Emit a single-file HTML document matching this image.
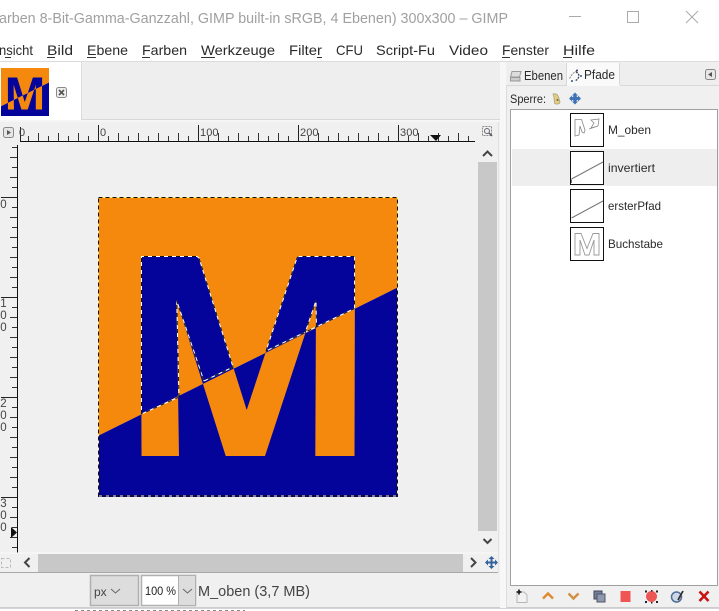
<!DOCTYPE html>
<html><head><meta charset="utf-8"><title>GIMP</title>
<style>
html,body{margin:0;padding:0;background:#fff;width:719px;height:611px;overflow:hidden}
svg{display:block}
text{font-family:"Liberation Sans",sans-serif}
</style></head>
<body>
<svg width="719" height="611" viewBox="0 0 719 611" xmlns="http://www.w3.org/2000/svg">
<defs>
<clipPath id="up"><polygon points="98,197 398,197 398,287.3 98,435.9"/></clipPath>
<clipPath id="dn"><polygon points="98,435.9 398,287.3 398,497 98,497"/></clipPath>
</defs>

<!-- title bar -->
<rect width="719" height="61" fill="#fff"/>
<text x="-1" y="23" font-size="14.5" fill="#a0a0a0" textLength="509" lengthAdjust="spacingAndGlyphs">arben 8-Bit-Gamma-Ganzzahl, GIMP built-in sRGB, 4 Ebenen) 300x300 – GIMP</text>
<line x1="569" x2="581" y1="16.5" y2="16.5" stroke="#aaa"/>
<rect x="627.5" y="11.5" width="11" height="11" fill="none" stroke="#aaa"/>
<path d="M686 11L698 23M698 11L686 23" stroke="#aaa" fill="none"/>

<!-- menu -->
<g font-size="14" fill="#2a2a2a">
<text x="-1" y="55" textLength="34" lengthAdjust="spacingAndGlyphs">nsicht</text>
<text x="47" y="55" textLength="26" lengthAdjust="spacingAndGlyphs">Bild</text>
<text x="87" y="55" textLength="41" lengthAdjust="spacingAndGlyphs">Ebene</text>
<text x="142" y="55" textLength="45" lengthAdjust="spacingAndGlyphs">Farben</text>
<text x="201" y="55" textLength="74" lengthAdjust="spacingAndGlyphs">Werkzeuge</text>
<text x="289" y="55" textLength="33" lengthAdjust="spacingAndGlyphs">Filter</text>
<text x="336" y="55" textLength="27" lengthAdjust="spacingAndGlyphs">CFU</text>
<text x="376" y="55" textLength="59" lengthAdjust="spacingAndGlyphs">Script-Fu</text>
<text x="449" y="55" textLength="39" lengthAdjust="spacingAndGlyphs">Video</text>
<text x="502" y="55" textLength="47" lengthAdjust="spacingAndGlyphs">Fenster</text>
<text x="563" y="55" textLength="32" lengthAdjust="spacingAndGlyphs">Hilfe</text>
</g>
<g stroke="#333" stroke-width="1">
<line x1="5" x2="11" y1="57.5" y2="57.5"/>
<line x1="47" x2="55" y1="57.5" y2="57.5"/>
<line x1="87" x2="96" y1="57.5" y2="57.5"/>
<line x1="142" x2="150" y1="57.5" y2="57.5"/>
<line x1="201" x2="215" y1="57.5" y2="57.5"/>
<line x1="317" x2="322" y1="57.5" y2="57.5"/>
<line x1="502" x2="510" y1="57.5" y2="57.5"/>
<line x1="563" x2="572" y1="57.5" y2="57.5"/>
</g>

<!-- main bg -->
<rect x="0" y="61" width="719" height="550" fill="#f0f0f0"/>
<line x1="0" x2="719" y1="61.5" y2="61.5" stroke="#dcdcdc"/>

<!-- tab bar -->
<rect x="81" y="62" width="419" height="58" fill="#eeeeee"/>
<rect x="0" y="62" width="81" height="58" fill="#fff"/>
<line x1="81.5" x2="81.5" y1="62" y2="120" stroke="#dcdcdc"/>
<line x1="81" x2="500" y1="119.5" y2="119.5" stroke="#d8d8d8"/>
<rect x="0" y="120" width="500" height="2" fill="#f6f6f6"/>

<!-- thumbnail -->
<g transform="translate(1,68) scale(.16) translate(-98,-197)">
<g clip-path="url(#up)">
<rect x="98" y="197" width="300" height="300" fill="#f5890d"/>
<polygon points="141,256 197,256 199,258 246.7,410 297,257 299,256 355,256 354.5,456 315.3,456 316,300.7 265,456 225.7,456 176.7,300.7 179,456 141.5,456" fill="#04049a"/>
</g>
<g clip-path="url(#dn)">
<rect x="98" y="197" width="300" height="300" fill="#04049a"/>
<polygon points="141,256 197,256 199,258 246.7,410 297,257 299,256 355,256 354.5,456 315.3,456 316,300.7 265,456 225.7,456 176.7,300.7 179,456 141.5,456" fill="#f5890d"/>
</g>
</g>
<rect x="56.5" y="87.5" width="10" height="10" rx="2" fill="#eee" stroke="#8a8a8a"/>
<path d="M59 90l5 5M64 90l-5 5" stroke="#555" stroke-width="1.6"/>

<!-- ruler corner button -->
<rect x="3.5" y="127.5" width="10" height="10" rx="2" fill="#e6e6e6" stroke="#8a8a8a"/>
<polygon points="7,130 7,135 11,132.5" fill="#555"/>

<!-- horizontal ruler -->
<line x1="20" x2="475" y1="141.5" y2="141.5" stroke="#111"/>
<line x1="20" x2="475" y1="138.5" y2="138.5" stroke="#333" stroke-width="5" stroke-dasharray="1 9" stroke-dashoffset="-8"/>
<line x1="20" x2="475" y1="137" y2="137" stroke="#333" stroke-width="8" stroke-dasharray="1 19" stroke-dashoffset="-18"/>
<g stroke="#222">
<line x1="98.5" x2="98.5" y1="125" y2="141"/>
<line x1="198.5" x2="198.5" y1="125" y2="141"/>
<line x1="298.5" x2="298.5" y1="125" y2="141"/>
<line x1="398.5" x2="398.5" y1="125" y2="141"/>
<line x1="20.5" x2="20.5" y1="127" y2="141"/>
</g>
<g font-size="11" fill="#444">
<text x="19" y="136">0</text>
<text x="100" y="136">0</text>
<text x="200" y="136" textLength="18.5">100</text>
<text x="300" y="136" textLength="18.5">200</text>
<text x="400" y="136" textLength="18.5">300</text>
</g>
<polygon points="430,135 441,135 436,141" fill="#111"/>

<!-- zoom-corner icon -->
<rect x="482.5" y="126.5" width="9" height="9" fill="none" stroke="#888" stroke-dasharray="2 1"/>
<circle cx="487" cy="131" r="2.5" fill="none" stroke="#667"/>
<line x1="489" y1="133" x2="492" y2="136" stroke="#555" stroke-width="1.5"/>

<!-- vertical ruler -->
<line x1="17.5" x2="17.5" y1="145" y2="553" stroke="#111"/>
<line x1="14.5" x2="14.5" y1="147" y2="553" stroke="#333" stroke-width="5" stroke-dasharray="1 9"/>
<line x1="13.5" x2="13.5" y1="157" y2="553" stroke="#333" stroke-width="7" stroke-dasharray="1 19"/>
<g stroke="#222">
<line x1="1" x2="17" y1="197.5" y2="197.5"/>
<line x1="1" x2="17" y1="297.5" y2="297.5"/>
<line x1="1" x2="17" y1="397.5" y2="397.5"/>
<line x1="1" x2="17" y1="497.5" y2="497.5"/>
</g>
<g font-size="11.5" fill="#444" text-anchor="middle">
<text x="3.5" y="208">0</text>
<text x="3.5" y="307">1</text><text x="3.5" y="319">0</text><text x="3.5" y="331">0</text>
<text x="3.5" y="407">2</text><text x="3.5" y="419">0</text><text x="3.5" y="431">0</text>
<text x="3.5" y="507">3</text><text x="3.5" y="519">0</text><text x="3.5" y="531">0</text>
</g>
<polygon points="11,527 11,538 17,532.5" fill="#111"/>

<!-- image: orange upper / blue lower with inverted M -->
<g clip-path="url(#up)">
<rect x="98" y="197" width="300" height="300" fill="#f5890d"/>
<polygon points="141,256 197,256 199,258 246.7,410 297,257 299,256 355,256 354.5,456 315.3,456 316,300.7 265,456 225.7,456 176.7,300.7 179,456 141.5,456" fill="#04049a"/>
</g>
<g clip-path="url(#dn)">
<rect x="98" y="197" width="300" height="300" fill="#04049a"/>
<polygon points="141,256 197,256 199,258 246.7,410 297,257 299,256 355,256 354.5,456 315.3,456 316,300.7 265,456 225.7,456 176.7,300.7 179,456 141.5,456" fill="#f5890d"/>
</g>

<!-- marching ants: image frame -->
<rect x="98.5" y="197.5" width="299" height="298.5" fill="none" stroke="#fff27a" stroke-width="1"/>
<rect x="98.5" y="197.5" width="299" height="298.5" fill="none" stroke="#111" stroke-width="1" stroke-dasharray="4 3"/>
<!-- marching ants: selection -->
<g fill="none" stroke-width="1">
<path d="M141.500 414V256.500H197L199 258L233 367M266 351L297 258L299 256.500H354.500V308.500M354.500 308.500L266 351M233 367L204 381M179 397L141.500 414M179 397L176.700 300.700L204 381M305 333L316 300.700L316.500 327" stroke="#fff"/>
<path d="M141.500 414V256.500H197L199 258L233 367M266 351L297 258L299 256.500H354.500V308.500M354.500 308.500L266 351M233 367L204 381M179 397L141.500 414M179 397L176.700 300.700L204 381M305 333L316 300.700L316.500 327" stroke="#111" stroke-dasharray="4 4"/>
</g>

<!-- vertical scrollbar -->
<rect x="478" y="162" width="19" height="369" fill="#c8c8c8"/>
<path d="M483 156L487.500 151.500L492 156" fill="none" stroke="#444" stroke-width="2"/>
<path d="M483.500 539L487.500 543L491.500 539" fill="none" stroke="#444" stroke-width="2"/>
<line x1="498.500" x2="498.500" y1="122" y2="573" stroke="#e2e2e2"/>

<!-- horizontal scrollbar -->
<rect x="0" y="552.500" width="498" height="1" fill="#fafafa"/>
<rect x="38" y="554" width="425" height="18" fill="#c8c8c8"/>
<line x1="0" x2="498" y1="572.500" y2="572.500" stroke="#a8a8a8"/>
<rect x="1.500" y="558.500" width="9" height="9" fill="none" stroke="#bbb" stroke-dasharray="3 2"/>
<path d="M29.500 558L25 562.500L29.500 567" fill="none" stroke="#444" stroke-width="2"/>
<path d="M471 558L475.500 562.500L471 567" fill="none" stroke="#444" stroke-width="2"/>
<path d="M491.500 556l3 3h-2v2.500h2.500v-2l3 3-3 3v-2h-2.500v2.500h2l-3 3-3-3h2v-2.500h-2.500v2l-3-3 3-3v2h2.500v-2.500h-2z" fill="#33639f"/>

<!-- status bar -->
<rect x="90.500" y="575.500" width="48" height="30" fill="#dddddd" stroke="#b0b0b0" stroke-width="1.500"/>
<text x="94" y="596" font-size="12" fill="#444">px</text>
<path d="M111 589l4.500 4 4.500-4" fill="none" stroke="#666"/>
<rect x="141.500" y="575.500" width="54" height="30" fill="#fff" stroke="#b0b0b0" stroke-width="1.500"/>
<rect x="179" y="576" width="16" height="29" fill="#dddddd"/>
<line x1="178.500" x2="178.500" y1="576" y2="605" stroke="#b0b0b0"/>
<text x="145" y="595" font-size="12" fill="#222" textLength="31" lengthAdjust="spacingAndGlyphs">100 %</text>
<path d="M183 589l4.500 4 4.500-4" fill="none" stroke="#666"/>
<text x="198" y="596" font-size="14.500" fill="#444" textLength="112" lengthAdjust="spacingAndGlyphs">M_oben (3,7 MB)</text>
<rect x="0" y="608" width="719" height="3" fill="#fff"/>
<line x1="0" x2="719" y1="608" y2="608" stroke="#aaa"/>
<line x1="75" x2="245" y1="610.500" y2="610.500" stroke="#888" stroke-dasharray="3 3"/>

<!-- dock -->
<rect x="500" y="62" width="6" height="546" fill="#f7f7f7"/>
<line x1="506.500" x2="506.500" y1="85" y2="608" stroke="#dcdcdc"/>
<rect x="507" y="63" width="212" height="22" fill="#eeeeee"/>
<line x1="507" x2="719" y1="85.500" y2="85.500" stroke="#d8d8d8"/>
<rect x="567" y="63" width="53" height="23" fill="#fafafa"/>
<line x1="619.500" x2="619.500" y1="63" y2="85" stroke="#d8d8d8"/>
<line x1="566.500" x2="566.500" y1="63" y2="85" stroke="#d8d8d8"/>
<path d="M512 71.500h9l-1.500 5.500h-9z" fill="#ddd" stroke="#999"/>
<path d="M510.500 77.500h9.500v3.500h-9.500z" fill="#ccc" stroke="#999"/>
<text x="524" y="80" font-size="12.500" fill="#2a2a2a" textLength="39" lengthAdjust="spacingAndGlyphs">Ebenen</text>
<path d="M569.500 78.500C572 74 575 71 578 70.500" fill="none" stroke="#888" stroke-dasharray="2 1"/>
<path d="M576 72C580 74 580 78 575 81" fill="none" stroke="#445" stroke-dasharray="2 1" stroke-width="1.300"/>
<circle cx="577" cy="70.500" r="1" fill="#336"/><circle cx="581" cy="76" r="1" fill="#358"/><circle cx="572" cy="81" r="1" fill="#358"/>
<text x="584" y="79" font-size="12.500" fill="#2a2a2a" textLength="31" lengthAdjust="spacingAndGlyphs">Pfade</text>
<rect x="705.500" y="69.500" width="10" height="10" rx="2" fill="#e6e6e6" stroke="#888"/>
<polygon points="712,72 712,77 708,74.500" fill="#555"/>

<text x="510" y="103" font-size="11.500" fill="#2a2a2a" textLength="36" lengthAdjust="spacingAndGlyphs">Sperre:</text>
<path d="M553 94c3-1 5 1 5.500 3l1.500 5c0 2-4 3-5.500 1l-.5-6z" fill="#e4cf78" stroke="#a8a088" stroke-width=".8"/>
<circle cx="557.500" cy="100" r="1" fill="#665"/>
<path d="M575 92.500l3 3h-1.500v1.500h1.500v-1.500l3 3-3 3v-1.500h-1.500v1.500h1.500l-3 3-3-3h1.500v-1.500h-1.500v1.500l-3-3 3-3v1.500h1.500v-1.500h-1.500z" fill="#3f73b5"/>
<rect x="573" y="96.500" width="4" height="4" fill="#3f73b5"/>

<!-- list -->
<rect x="510.500" y="109.500" width="207" height="476" fill="#fff" stroke="#a0a0a0"/>
<rect x="512" y="149" width="205" height="37" fill="#eeeeee"/>

<g fill="#fff" stroke="#111">
<rect x="570.500" y="113.500" width="33" height="33"/>
<rect x="570.500" y="151.500" width="33" height="33"/>
<rect x="570.500" y="189.500" width="33" height="33"/>
<rect x="570.500" y="227.500" width="33" height="33"/>
</g>
<path d="M575 119.500h6.500L585 130l-1 3-2-1-2-6-1 9-4 1zM591 120l8-1-1 7-7 2 3-5zM589 129l9-3" fill="none" stroke="#888" stroke-width=".8"/>
<path d="M571.500 179.500V183M571.500 179L603 162" fill="none" stroke="#777"/>
<path d="M571.500 218L603 201" fill="none" stroke="#777"/>
<path d="M575 233.500h6l6 15 6-15h6V255h-5V240l-5 15h-4l-5-15v15h-5z" fill="none" stroke="#999" stroke-width=".9"/>

<g font-size="12" fill="#2a2a2a">
<text x="608" y="134" textLength="43" lengthAdjust="spacingAndGlyphs">M_oben</text>
<text x="608" y="172" textLength="47" lengthAdjust="spacingAndGlyphs">invertiert</text>
<text x="608" y="210" textLength="53" lengthAdjust="spacingAndGlyphs">ersterPfad</text>
<text x="608" y="248" textLength="55" lengthAdjust="spacingAndGlyphs">Buchstabe</text>
</g>

<!-- dock toolbar -->
<path d="M517 592h7l3 3v7.500h-10z" fill="#f2f2f2" stroke="#b8b8b8"/>
<path d="M519 589.500v5M516.500 592h5" stroke="#111" stroke-width="1.600"/>
<path d="M543 598.500l5-5 5 5" fill="none" stroke="#e08a30" stroke-width="2.400"/>
<path d="M568.500 593.500l5 5 5-5" fill="none" stroke="#d09040" stroke-width="2.400"/>
<rect x="594" y="591" width="8" height="8" fill="#6f7f9f" stroke="#445"/>
<rect x="597" y="594" width="8" height="8" fill="#8d97ad" stroke="#556"/>
<rect x="620.500" y="591" width="10" height="11" fill="#ef5555"/>
<circle cx="651.500" cy="596.500" r="5.500" fill="#ee5555"/>
<g fill="#222"><rect x="645" y="590.500" width="2" height="2"/><rect x="656" y="590.500" width="2" height="2"/><rect x="645" y="601" width="2" height="2"/><rect x="656" y="601" width="2" height="2"/><rect x="651" y="590" width="1.500" height="1.500"/><rect x="651" y="602" width="1.500" height="1.500"/></g>
<circle cx="676.500" cy="597" r="5" fill="#cfd8e6" stroke="#4f6f96" stroke-width="1.500"/>
<path d="M678 600l5-9" stroke="#333" stroke-width="1.800"/>
<path d="M699.500 591.500l9 9.500M708.500 591.500l-9 9.500" stroke="#c81414" stroke-width="2.600"/>
</svg>
</body></html>
